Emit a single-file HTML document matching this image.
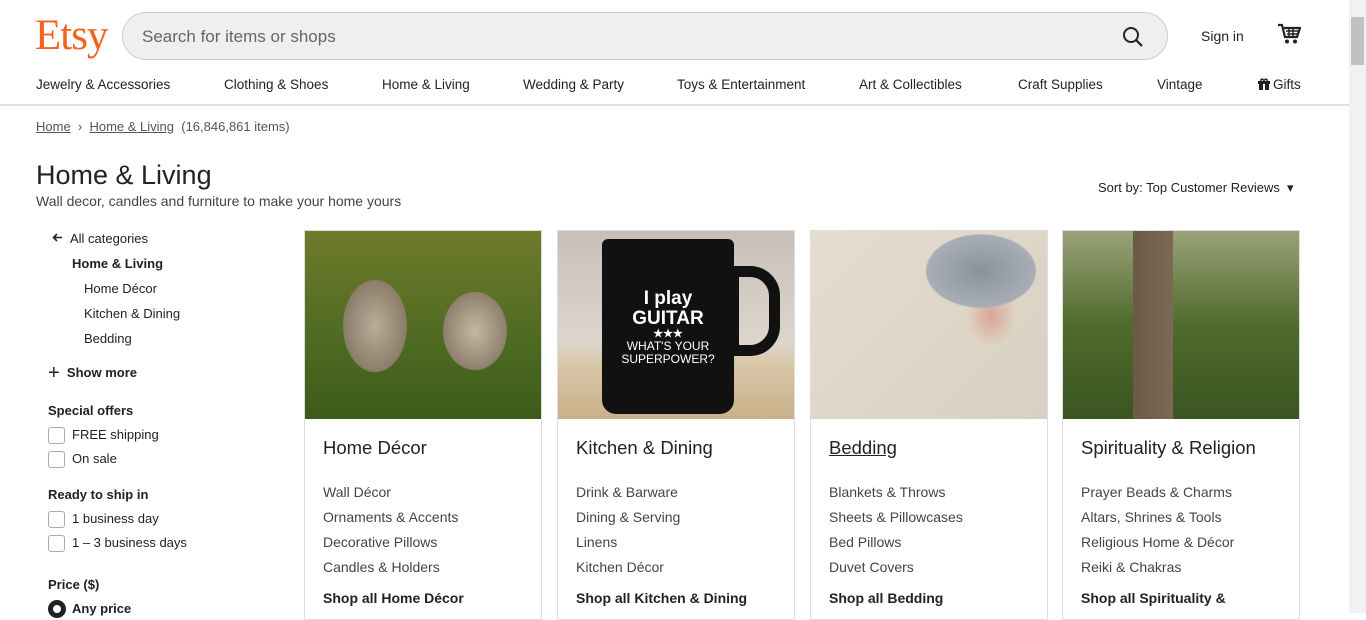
<!DOCTYPE html>
<html><head><meta charset="utf-8"><style>
*{box-sizing:border-box;margin:0;padding:0}
body{width:1366px;height:613px;overflow:hidden;font-family:"Liberation Sans",sans-serif;color:#222;background:#fff;position:relative}
.a{position:absolute;white-space:nowrap}
.logo{left:35px;top:11px;font-family:"Liberation Serif",serif;font-size:43px;color:#f1641e;letter-spacing:-1px}
.search{left:122px;top:12px;width:1046px;height:48px;border:1px solid #ccc;border-radius:24px;background:#efefef}
.search span{position:absolute;left:19px;top:14px;font-size:17px;color:#666}
.nav{top:77px;font-size:13.5px;color:#222}
.hr{left:0;top:104px;width:1349px;height:2px;background:#e1e1e1}
.sb{left:1349px;top:0;width:17px;height:613px;background:#f1f1f1}
.thumb{left:1351px;top:17px;width:13px;height:48px;background:#c1c1c1}
.s13{font-size:13px}
.cb{width:17px;height:17px;border:1.5px solid #aaa;border-radius:3px;left:48px}
.card{top:230px;width:238px;height:390px;border:1px solid #ddd;}
.img{position:absolute;left:0;top:0;width:236px;height:188px}
.card h3{position:absolute;left:18px;top:206px;font-size:18.5px;font-weight:normal;color:#222}
.card .l{position:absolute;left:18px;font-size:14px;color:#444}
.card b.l{color:#222;font-weight:bold}
</style></head><body>
<div class="a logo">Etsy</div>
<div class="a search"><span>Search for items or shops</span>
<svg style="position:absolute;right:22px;top:12px" width="24" height="24" viewBox="0 0 24 24"><circle cx="10" cy="10" r="7" fill="none" stroke="#222" stroke-width="2"/><path d="M15 15l6 6" stroke="#222" stroke-width="2.2"/></svg></div>
<div class="a" style="left:1201px;top:28px;font-size:14px">Sign in</div>
<svg class="a" style="left:1277px;top:23px" width="24" height="22" viewBox="0 0 24 22"><path d="M1 2h4l3 12h12l3-9H7" fill="none" stroke="#222" stroke-width="2.2"/><path d="M9 8h12M10 11h10M12 5v9M16 5v9" stroke="#222" stroke-width="1.5"/><circle cx="10" cy="18.5" r="2" fill="#222"/><circle cx="18" cy="18.5" r="2" fill="#222"/></svg>
<div class="a nav" style="left:36px">Jewelry &amp; Accessories</div>
<div class="a nav" style="left:224px">Clothing &amp; Shoes</div>
<div class="a nav" style="left:382px">Home &amp; Living</div>
<div class="a nav" style="left:523px">Wedding &amp; Party</div>
<div class="a nav" style="left:677px">Toys &amp; Entertainment</div>
<div class="a nav" style="left:859px">Art &amp; Collectibles</div>
<div class="a nav" style="left:1018px">Craft Supplies</div>
<div class="a nav" style="left:1157px">Vintage</div>
<div class="a nav" style="left:1258px"><svg width="12" height="12" viewBox="0 0 12 12" style="vertical-align:-1px;margin-right:3px"><rect x="0" y="3" width="12" height="3" fill="#222"/><rect x="1" y="6" width="4" height="6" fill="#222"/><rect x="7" y="6" width="4" height="6" fill="#222"/><path d="M3 3C2 0 6 1 6 3C6 1 10 0 9 3" fill="none" stroke="#222" stroke-width="1.4"/></svg>Gifts</div>
<div class="hr a"></div>
<div class="a s13" style="left:36px;top:119px;color:#555"><u>Home</u> &nbsp;›&nbsp; <u>Home &amp; Living</u>&nbsp; (16,846,861 items)</div>
<div class="a" style="left:36px;top:160px;font-size:27px">Home &amp; Living</div>
<div class="a" style="left:36px;top:193px;font-size:14px;color:#444">Wall decor, candles and furniture to make your home yours</div>
<div class="a s13" style="left:1098px;top:180px">Sort by: Top Customer Reviews &nbsp;▾</div>
<svg class="a" style="left:52px;top:233px" width="11" height="9" viewBox="0 0 11 9"><path d="M10 4.5H2M5 1L1.5 4.5 5 8" fill="none" stroke="#222" stroke-width="1.6"/></svg>
<div class="a s13" style="left:70px;top:231px">All categories</div>
<div class="a s13" style="left:72px;top:256px;font-weight:bold">Home &amp; Living</div>
<div class="a s13" style="left:84px;top:281px">Home Décor</div>
<div class="a s13" style="left:84px;top:306px">Kitchen &amp; Dining</div>
<div class="a s13" style="left:84px;top:331px">Bedding</div>
<div class="a s13" style="left:48px;top:362px;font-weight:bold"><span style="font-size:20px;font-weight:normal;vertical-align:-2px">+</span>&nbsp; Show more</div>
<div class="a s13" style="left:48px;top:403px;font-weight:bold">Special offers</div>
<div class="a cb" style="top:427px"></div><div class="a s13" style="left:72px;top:427px">FREE shipping</div>
<div class="a cb" style="top:451px"></div><div class="a s13" style="left:72px;top:451px">On sale</div>
<div class="a s13" style="left:48px;top:487px;font-weight:bold">Ready to ship in</div>
<div class="a cb" style="top:511px"></div><div class="a s13" style="left:72px;top:511px">1 business day</div>
<div class="a cb" style="top:535px"></div><div class="a s13" style="left:72px;top:535px">1 – 3 business days</div>
<div class="a s13" style="left:48px;top:577px;font-weight:bold">Price ($)</div>
<div class="a" style="left:48px;top:600px;width:18px;height:18px;border-radius:50%;border:5px solid #222"></div>
<div class="a s13" style="left:72px;top:601px;font-weight:bold">Any price</div>

<div class="a card" style="left:304px"><div class="img" style="background:radial-gradient(ellipse 45px 65px at 70px 95px,#b9ad9a,#8a7d6a 70%,transparent 72%),radial-gradient(ellipse 45px 55px at 170px 100px,#c4b8a4,#8d806c 70%,transparent 72%),linear-gradient(#6f7a2a,#4d6a22 60%,#3d5a1a)"></div>
<h3>Home Décor</h3><div class="l" style="top:253px">Wall Décor</div><div class="l" style="top:278px">Ornaments &amp; Accents</div><div class="l" style="top:303px">Decorative Pillows</div><div class="l" style="top:328px">Candles &amp; Holders</div><b class="l" style="top:359px">Shop all Home Décor</b></div>

<div class="a card" style="left:557px"><div class="img" style="background:linear-gradient(#c8c0b8,#ddd6cc 60%,#d9c7a8 70%,#c9b08a)"><div style="position:absolute;left:44px;top:8px;width:132px;height:175px;background:#111;border-radius:6px 6px 14px 14px;color:#fff;text-align:center;font-weight:bold;font-size:19px;padding-top:50px;line-height:20px">I play<br>GUITAR<div style="font-size:11px;line-height:11px">★★★</div><div style="font-size:12px;font-weight:normal;line-height:13px">WHAT'S YOUR<br>SUPERPOWER?</div></div><div style="position:absolute;left:170px;top:35px;width:52px;height:90px;border:11px solid #111;border-radius:0 30px 30px 0"></div></div>
<h3>Kitchen &amp; Dining</h3><div class="l" style="top:253px">Drink &amp; Barware</div><div class="l" style="top:278px">Dining &amp; Serving</div><div class="l" style="top:303px">Linens</div><div class="l" style="top:328px">Kitchen Décor</div><b class="l" style="top:359px">Shop all Kitchen &amp; Dining</b></div>

<div class="a card" style="left:810px"><div class="img" style="background:radial-gradient(ellipse 90px 60px at 170px 40px,#8b929a,#a8aeb5 60%,transparent 62%),radial-gradient(ellipse 25px 30px at 180px 85px,#d9a596,transparent),linear-gradient(135deg,#e4ddd0,#d8d0c0)"></div>
<h3><u>Bedding</u></h3><div class="l" style="top:253px">Blankets &amp; Throws</div><div class="l" style="top:278px">Sheets &amp; Pillowcases</div><div class="l" style="top:303px">Bed Pillows</div><div class="l" style="top:328px">Duvet Covers</div><b class="l" style="top:359px">Shop all Bedding</b></div>

<div class="a card" style="left:1062px"><div class="img" style="background:linear-gradient(90deg,transparent 70px,#6b5a45 70px,#7a6a55 110px,transparent 110px),linear-gradient(#9aa27a,#4f6b2c 50%,#3a5522)"></div>
<h3>Spirituality &amp; Religion</h3><div class="l" style="top:253px">Prayer Beads &amp; Charms</div><div class="l" style="top:278px">Altars, Shrines &amp; Tools</div><div class="l" style="top:303px">Religious Home &amp; Décor</div><div class="l" style="top:328px">Reiki &amp; Chakras</div><b class="l" style="top:359px">Shop all Spirituality &amp;</b></div>

<div class="a sb"></div><div class="a thumb"></div>
</body></html>
